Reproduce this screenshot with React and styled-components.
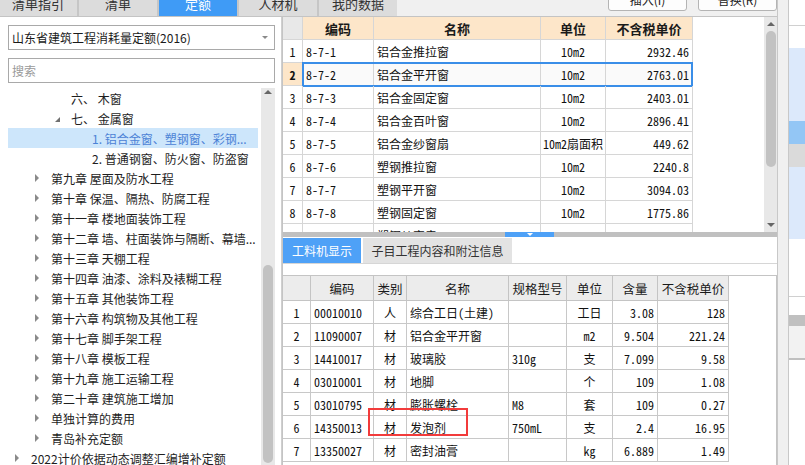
import React from 'react';
import styled, { createGlobalStyle, css } from 'styled-components';

const Global = createGlobalStyle`
  html, body { margin: 0; padding: 0; background: #f0f0f0; }
  body { font-family: "Noto Sans CJK SC", sans-serif; }
  * { box-sizing: border-box; }
`;

const MONO = `"Noto Sans Mono CJK SC", "Noto Sans CJK SC", monospace`;

const Root = styled.div`
  width: 805px;
  height: 465px;
  overflow: hidden;
  display: flex;
  background: #f0f0f0;
`;

const Main = styled.div`
  width: 777px;
  flex-shrink: 0;
  display: flex;
  flex-direction: column;
`;

const TopBar = styled.div`
  height: 17px;
  flex-shrink: 0;
  border-bottom: 1px solid #c4c4c4;
  display: flex;
  align-items: flex-end;
  overflow: hidden;
  background: #f0f0f0;
`;

const TabStrip = styled.div`
  display: flex;
  gap: 2px;
  margin-left: -1px;
  background: #c6c6c6;
  height: 25px;
`;

const TopTab = styled.div`
  width: 78px;
  height: 25px;
  display: flex;
  align-items: center;
  justify-content: center;
  font-size: 13px;
  color: ${p => (p.$active ? '#ffffff' : '#333333')};
  background: ${p => (p.$active ? '#3f9bf6' : '#dcdcdc')};
`;

const ButtonGroup = styled.div`
  margin-left: auto;
  margin-bottom: 5px;
  display: flex;
  gap: 11px;
`;

const Button = styled.div`
  width: 79px;
  height: 24px;
  border: 1px solid #b4b4b4;
  border-radius: 3px;
  background: #fdfdfd;
  font-size: 12px;
  color: #222;
  display: flex;
  align-items: center;
  justify-content: center;
`;

const Body = styled.div`
  flex: 1;
  min-height: 0;
  display: flex;
`;

const LeftPanel = styled.div`
  width: 282px;
  flex-shrink: 0;
  background: #ffffff;
  border-right: 1px solid #cfcfcf;
  padding: 8px 0 0 8px;
  display: flex;
  flex-direction: column;
`;

const Field = styled.div`
  width: 267px;
  height: 25px;
  border: 1px solid #a9a9a9;
  display: flex;
  align-items: center;
  padding: 0 3px;
  font-size: 12px;
  color: ${p => (p.$placeholder ? '#9a9a9a' : '#1a1a1a')};
  & + & { margin-top: 8px; }
`;

const Caret = styled.span`
  margin-left: auto;
  margin-right: 3px;
  width: 0;
  height: 0;
  border-left: 3px solid transparent;
  border-right: 3px solid transparent;
  border-top: 3px solid #8a8a8a;
`;

const TreeWrap = styled.div`
  margin-top: 5px;
  flex: 1;
  min-height: 0;
  display: flex;
  overflow: hidden;
`;

const Tree = styled.div`
  width: 250px;
  display: flex;
  flex-direction: column;
  overflow: hidden;
`;

const TreeRow = styled.div`
  height: 20px;
  flex-shrink: 0;
  display: flex;
  align-items: center;
  padding-left: ${p => p.$indent}px;
  font-size: 12px;
  white-space: nowrap;
  color: ${p => (p.$selected ? '#4b82d6' : '#1e1e1e')};
  background: ${p => (p.$selected ? '#cde6fb' : 'transparent')};
`;

const ArrowSlot = styled.span`
  width: 16px;
  flex-shrink: 0;
  display: flex;
  align-items: center;
`;

const Collapsed = styled.span`
  width: 0;
  height: 0;
  border-top: 4px solid transparent;
  border-bottom: 4px solid transparent;
  border-left: 4px solid #8a8a8a;
`;

const Expanded = styled.span`
  width: 0;
  height: 0;
  margin-top: 2px;
  border-left: 5px solid transparent;
  border-bottom: 5px solid #707070;
`;

const ScrollTrack = styled.div`
  width: ${p => p.$w}px;
  flex-shrink: 0;
  margin-left: ${p => p.$ml || 0}px;
  background: #e8e8e8;
  display: flex;
  flex-direction: column;
  align-items: center;
  padding: ${p => p.$pad}px 0;
`;

const UpArrow = styled.span`
  width: 0;
  height: 0;
  border-left: 4px solid transparent;
  border-right: 4px solid transparent;
  border-bottom: 4px solid #666;
  flex-shrink: 0;
`;

const DownArrow = styled.span`
  width: 0;
  height: 0;
  margin-top: auto;
  border-left: 4px solid transparent;
  border-right: 4px solid transparent;
  border-top: 4px solid #666;
  flex-shrink: 0;
`;

const Thumb = styled.div`
  width: 10px;
  height: ${p => p.$h}px;
  margin-top: ${p => (p.$auto ? 'auto' : `${p.$mt}px`)};
  border-radius: 5px;
  background: #c2c2c2;
  flex-shrink: 0;
`;

const RightPane = styled.div`
  flex: 1;
  min-width: 0;
  display: flex;
  flex-direction: column;
  background: #ffffff;
  border-left: 1px solid #c4c4c4;
`;

const TopArea = styled.div`
  height: 215px;
  flex-shrink: 0;
  display: flex;
  background: #fff;
`;

const GridBox = styled.div`
  width: 410px;
  display: flex;
  flex-direction: column;
  overflow: hidden;
`;

const Filler = styled.div`
  flex: 1;
`;

const GridRow = styled.div`
  position: relative;
  display: grid;
  grid-template-columns: ${p => p.$cols};
  height: ${p => p.$h}px;
  flex-shrink: 0;
  ${p =>
    p.$selected &&
    css`
      &::after {
        content: '';
        position: absolute;
        left: 19px;
        right: 0;
        top: -1px;
        bottom: -1px;
        border: 2px solid #3a8ee8;
        pointer-events: none;
      }
    `}
`;

const Cell = styled.div`
  border-right: 1px solid ${p => p.$line || '#d6d6d6'};
  border-bottom: 1px solid ${p => p.$line || '#d6d6d6'};
  display: flex;
  align-items: center;
  justify-content: ${p => (p.$align === 'right' ? 'flex-end' : p.$align === 'center' ? 'center' : 'flex-start')};
  padding: 0 ${p => (p.$align === 'center' ? 0 : 3)}px 0 ${p => (p.$align === 'left' ? 3 : 0)}px;
  font-family: ${MONO};
  font-size: 12px;
  color: #111;
  white-space: nowrap;
  overflow: hidden;
  background: ${p => p.$bg || 'transparent'};
  font-weight: ${p => (p.$bold ? 700 : 400)};
`;

const HeadCell = styled(Cell)`
  font-family: "Noto Sans CJK SC", sans-serif;
  font-size: ${p => p.$fs || 12}px;
  color: #1a1a1a;
`;

const Splitter = styled.div`
  height: 5px;
  flex-shrink: 0;
  background: #c0c0c0;
  display: flex;
`;

const SplitHandle = styled.div`
  margin-left: 222px;
  width: 49px;
  height: 5px;
  background: #4ea1f7;
  display: flex;
  justify-content: center;
  align-items: center;
`;

const SmallDown = styled.span`
  width: 0;
  height: 0;
  border-left: 3px solid transparent;
  border-right: 3px solid transparent;
  border-top: 3px solid #ffffff;
`;

const BottomArea = styled.div`
  flex: 1;
  min-height: 0;
  display: flex;
  flex-direction: column;
  background: #fff;
`;

const BottomTabs = styled.div`
  display: flex;
  gap: 2px;
  margin-top: 1px;
  height: 25px;
  flex-shrink: 0;
`;

const BottomTab = styled.div`
  width: ${p => p.$w}px;
  flex-shrink: 0;
  height: 25px;
  display: flex;
  align-items: center;
  justify-content: center;
  font-size: 12px;
  white-space: nowrap;
  color: ${p => (p.$active ? '#ffffff' : '#333333')};
  background: ${p => (p.$active ? '#4ea1f7' : '#e3e3e3')};
`;

const BottomContent = styled.div`
  flex: 1;
  min-height: 0;
  border-top: 1px solid #d6d6d6;
  padding-top: 11px;
  display: flex;
  flex-direction: column;
`;

const Frame = styled.div`
  position: relative;
  flex: 1;
  border-top: 1px solid #c4c4c4;
  border-right: 1px solid #c4c4c4;
  display: flex;
  flex-direction: column;
  overflow: hidden;
`;

const Highlight = styled.div`
  position: absolute;
  left: 85px;
  top: 132px;
  width: 100px;
  height: 28px;
  border: 2px solid #f23b3b;
  pointer-events: none;
`;

const Gutter = styled.div`
  width: 11px;
  flex-shrink: 0;
  background: #f0f0f0;
  border-left: 1px solid #c8c8c8;
`;

const SideStrip = styled.div`
  width: 17px;
  flex-shrink: 0;
  border-left: 1px solid #c8c8c8;
  background: #ffffff;
  display: flex;
  flex-direction: column;
`;

const Band = styled.div`
  height: ${p => p.$h}px;
  flex-shrink: 0;
  background: ${p => p.$bg};
`;

const topCols = '20px 71px 167px 65px 87px';
const botCols = '28px 63px 33px 102px 58px 46px 45px 71px';

const topRows = [
  ['1', '8-7-1', '铝合金推拉窗', '10m2', '2932.46'],
  ['2', '8-7-2', '铝合金平开窗', '10m2', '2763.01'],
  ['3', '8-7-3', '铝合金固定窗', '10m2', '2403.01'],
  ['4', '8-7-4', '铝合金百叶窗', '10m2', '2896.41'],
  ['5', '8-7-5', '铝合金纱窗扇', '10m2扇面积', '449.62'],
  ['6', '8-7-6', '塑钢推拉窗', '10m2', '2240.8'],
  ['7', '8-7-7', '塑钢平开窗', '10m2', '3094.03'],
  ['8', '8-7-8', '塑钢固定窗', '10m2', '1775.86'],
  ['9', '8-7-9', '塑钢纱窗扇', '10m2', '452.13'],
];

const botRows = [
  ['1', '00010010', '人', '综合工日(土建)', '', '工日', '3.08', '128'],
  ['2', '11090007', '材', '铝合金平开窗', '', 'm2', '9.504', '221.24'],
  ['3', '14410017', '材', '玻璃胶', '310g', '支', '7.099', '9.58'],
  ['4', '03010001', '材', '地脚', '', '个', '109', '1.08'],
  ['5', '03010795', '材', '膨胀螺栓', 'M8', '套', '109', '0.27'],
  ['6', '14350013', '材', '发泡剂', '750mL', '支', '2.4', '16.95'],
  ['7', '13350027', '材', '密封油膏', '', 'kg', '6.889', '1.49'],
];

const botAlign = ['center', 'left', 'center', 'left', 'left', 'center', 'right', 'right'];

const tree = [
  { indent: 47, text: '六、 木窗' },
  { indent: 47, text: '七、 金属窗', arrow: 'open' },
  { indent: 68, text: '1. 铝合金窗、塑钢窗、彩钢...', selected: true },
  { indent: 68, text: '2. 普通钢窗、防火窗、防盗窗' },
  { indent: 27, text: '第九章 屋面及防水工程', arrow: 'closed' },
  { indent: 27, text: '第十章 保温、隔热、防腐工程', arrow: 'closed' },
  { indent: 27, text: '第十一章 楼地面装饰工程', arrow: 'closed' },
  { indent: 27, text: '第十二章 墙、柱面装饰与隔断、幕墙...', arrow: 'closed' },
  { indent: 27, text: '第十三章 天棚工程', arrow: 'closed' },
  { indent: 27, text: '第十四章 油漆、涂料及裱糊工程', arrow: 'closed' },
  { indent: 27, text: '第十五章 其他装饰工程', arrow: 'closed' },
  { indent: 27, text: '第十六章 构筑物及其他工程', arrow: 'closed' },
  { indent: 27, text: '第十七章 脚手架工程', arrow: 'closed' },
  { indent: 27, text: '第十八章 模板工程', arrow: 'closed' },
  { indent: 27, text: '第十九章 施工运输工程', arrow: 'closed' },
  { indent: 27, text: '第二十章 建筑施工增加', arrow: 'closed' },
  { indent: 27, text: '单独计算的费用', arrow: 'closed' },
  { indent: 27, text: '青岛补充定额', arrow: 'closed' },
  { indent: 7, text: '2022计价依据动态调整汇编增补定额', arrow: 'closed' },
];

const bands = [
  [25, '#ffffff'],
  [1, '#d0d0d0'],
  [22, '#ffffff'],
  [73, '#dce9fb'],
  [23, '#93c6f5'],
  [23, '#dadada'],
  [72, '#dce9fb'],
  [57, '#ffffff'],
  [1, '#d0d0d0'],
  [18, '#ffffff'],
  [11, '#c0c0c0'],
  [32, '#f2f2f2'],
  [2, '#c0c0c0'],
];

export default function App() {
  return (
    <Root>
      <Global />
      <Main>
        <TopBar>
          <TabStrip>
            <TopTab>清单指引</TopTab>
            <TopTab>清单</TopTab>
            <TopTab $active>定额</TopTab>
            <TopTab>人材机</TopTab>
            <TopTab>我的数据</TopTab>
          </TabStrip>
          <ButtonGroup>
            <Button>插入(I)</Button>
            <Button>替换(R)</Button>
          </ButtonGroup>
        </TopBar>
        <Body>
          <LeftPanel>
            <Field>
              山东省建筑工程消耗量定额(2016)
              <Caret />
            </Field>
            <Field $placeholder>搜索</Field>
            <TreeWrap>
              <Tree>
                {tree.map((n, i) => (
                  <TreeRow key={i} $indent={n.indent} $selected={n.selected}>
                    <ArrowSlot>
                      {n.arrow === 'closed' && <Collapsed />}
                      {n.arrow === 'open' && <Expanded />}
                    </ArrowSlot>
                    {n.text}
                  </TreeRow>
                ))}
              </Tree>
              <ScrollTrack $w={14} $ml={3} $pad={2}>
                <UpArrow />
                <Thumb $h={198} $auto />
              </ScrollTrack>
            </TreeWrap>
          </LeftPanel>
          <RightPane>
            <TopArea>
              <GridBox>
                <GridRow $cols={topCols} $h={23}>
                  <HeadCell $align="center" $bg="#e8e8e8" />
                  <HeadCell $align="center" $bg="#fde6c9" $bold $fs={13}>编码</HeadCell>
                  <HeadCell $align="center" $bg="#fde6c9" $bold $fs={13}>名称</HeadCell>
                  <HeadCell $align="center" $bg="#fde6c9" $bold $fs={13}>单位</HeadCell>
                  <HeadCell $align="center" $bg="#fde6c9" $bold $fs={13}>不含税单价</HeadCell>
                </GridRow>
                {topRows.map(r => {
                  const sel = r[0] === '2';
                  return (
                    <GridRow key={r[0]} $cols={topCols} $h={23} $selected={sel}>
                      <Cell $align="center" $bg={sel ? '#fde6c9' : undefined} $bold={sel}>{r[0]}</Cell>
                      <Cell $align="left" $bg={sel ? '#fafafa' : undefined}>{r[1]}</Cell>
                      <Cell $align="left" $bg={sel ? '#fafafa' : undefined}>{r[2]}</Cell>
                      <Cell $align="center" $bg={sel ? '#fafafa' : undefined}>{r[3]}</Cell>
                      <Cell $align="right" $bg={sel ? '#fafafa' : undefined}>{r[4]}</Cell>
                    </GridRow>
                  );
                })}
              </GridBox>
              <Filler />
              <ScrollTrack $w={13} $pad={5}>
                <UpArrow />
                <Thumb $h={136} $mt={5} />
                <DownArrow />
              </ScrollTrack>
            </TopArea>
            <Splitter>
              <SplitHandle>
                <SmallDown />
              </SplitHandle>
            </Splitter>
            <BottomArea>
              <BottomTabs>
                <BottomTab $active $w={78}>工料机显示</BottomTab>
                <BottomTab $w={149}>子目工程内容和附注信息</BottomTab>
              </BottomTabs>
              <BottomContent>
                <Frame>
                  <GridRow $cols={botCols} $h={25}>
                    {['', '编码', '类别', '名称', '规格型号', '单位', '含量', '不含税单价'].map((h, i) => (
                      <HeadCell key={i} $align="center" $bg="#ececec" $line="#c4c4c4" $fs={12.5}>
                        {h}
                      </HeadCell>
                    ))}
                  </GridRow>
                  {botRows.map(r => (
                    <GridRow key={r[0]} $cols={botCols} $h={23}>
                      {r.map((v, i) => (
                        <Cell key={i} $align={botAlign[i]} $line="#c8c8c8">
                          {v}
                        </Cell>
                      ))}
                    </GridRow>
                  ))}
                  <Highlight />
                </Frame>
              </BottomContent>
            </BottomArea>
          </RightPane>
        </Body>
      </Main>
      <Gutter />
      <SideStrip>
        {bands.map(([h, bg], i) => (
          <Band key={i} $h={h} $bg={bg} />
        ))}
      </SideStrip>
    </Root>
  );
}
